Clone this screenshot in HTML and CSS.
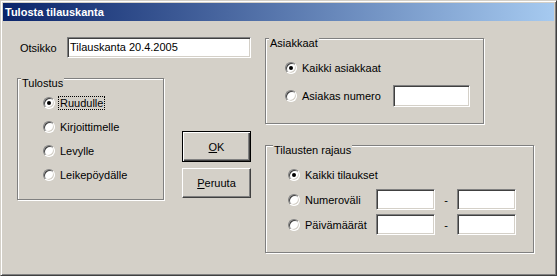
FILE: index.html
```html
<!DOCTYPE html>
<html>
<head>
    <title>Tulosta tilauskanta</title>
    <link rel="stylesheet" href="styles.css">
</head>
<body>
    <div class="window">
        <div class="titlebar">Tulosta tilauskanta</div>

        <div class="client">
            <div class="col-left">
                <div class="field-row">
                    <span class="field-label">Otsikko</span>
                    <div class="textbox textbox-title">Tilauskanta 20.4.2005</div>
                </div>

                <div class="left-bottom">
                    <div class="group group-print">
                        <span class="group-title">Tulostus</span>
                        <div class="option"><span class="radio checked"></span><span class="option-text focused">Ruudulle</span></div>
                        <div class="option"><span class="radio"></span><span class="option-text">Kirjoittimelle</span></div>
                        <div class="option"><span class="radio"></span><span class="option-text">Levylle</span></div>
                        <div class="option"><span class="radio"></span><span class="option-text">Leikepöydälle</span></div>
                    </div>

                    <div class="buttons">
                        <button class="btn btn-default"><u>O</u>K</button>
                        <button class="btn"><u>P</u>eruuta</button>
                    </div>
                </div>
            </div>

            <div class="col-right">
                <div class="group group-customers">
                    <span class="group-title">Asiakkaat</span>
                    <div class="option span-all"><span class="radio checked"></span><span class="option-text">Kaikki asiakkaat</span></div>
                    <div class="option"><span class="radio"></span><span class="option-text">Asiakas numero</span></div>
                    <div class="textbox textbox-customer"></div>
                </div>

                <div class="group group-orders">
                    <span class="group-title group-title-wide">Tilausten rajaus</span>
                    <div class="option span-all"><span class="radio checked"></span><span class="option-text">Kaikki tilaukset</span></div>

                    <div class="option"><span class="radio"></span><span class="option-text">Numeroväli</span></div>
                    <div class="textbox textbox-small"></div>
                    <span class="dash">-</span>
                    <div class="textbox textbox-small"></div>

                    <div class="option"><span class="radio"></span><span class="option-text">Päivämäärät</span></div>
                    <div class="textbox textbox-small"></div>
                    <span class="dash">-</span>
                    <div class="textbox textbox-small"></div>
                </div>
            </div>
        </div>
    </div>
</body>
</html>
```

FILE: styles.css
```css
* {
    box-sizing: border-box;
    margin: 0;
    padding: 0;
}

html {
    background-color: #d4d0c8;
}

body {
    margin: 0;
    font-family: "Liberation Sans", Arial, sans-serif;
    font-size: 11px;
    color: #000000;
}

/* window frame */
.window {
    width: 557px;
    height: 276px;
    padding: 2px;
    background-color: #d4d0c8;
    border: 1px solid;
    border-color: #d4d0c8 #404040 #404040 #d4d0c8;
    box-shadow: inset 1px 1px #ffffff, inset -1px -1px #808080;
}

.titlebar {
    height: 18px;
    padding-left: 2px;
    line-height: 18px;
    font-size: 11px;
    font-weight: bold;
    color: #ffffff;
    background: linear-gradient(to right, #0a246a, #a6caf0);
}

.client {
    display: flex;
    padding: 16px 0 0 14px;
}

.col-left {
    width: 234px;
    margin-right: 14px;
}

.col-right {
    display: flex;
    flex-direction: column;
    gap: 21px;
    padding-top: 1px;
}

/* Otsikko row */
.field-row {
    display: flex;
    align-items: center;
    height: 21px;
}

.field-label {
    width: 50px;
    padding-left: 3px;
}

/* sunken text boxes */
.textbox {
    height: 21px;
    padding-left: 2px;
    line-height: 19px;
    background-color: #ffffff;
    border: 1px solid;
    border-color: #808080 #ffffff #ffffff #808080;
    box-shadow: inset 1px 1px #404040, inset -1px -1px #d4d0c8;
}

.textbox-title {
    width: 184px;
}

.textbox-customer {
    width: 77px;
    height: 22px;
}

.textbox-small {
    width: 59px;
}

.left-bottom {
    display: flex;
    gap: 18px;
    margin-top: 20px;
}

/* etched group boxes */
.group {
    position: relative;
    border: 1px solid #808080;
    box-shadow: inset 1px 1px #ffffff, 1px 1px #ffffff;
}

.group-title {
    position: absolute;
    top: -2px;
    left: 3px;
    padding: 0 1px;
    line-height: 13px;
    background-color: #d4d0c8;
}

.group-title-wide {
    left: 7px;
}

.group-print {
    display: flex;
    flex-direction: column;
    width: 147px;
    height: 122px;
    padding: 12px 0 0 25px;
}

.group-print .option {
    height: 24px;
}

.group-customers {
    display: grid;
    grid-template-columns: 108px 77px;
    grid-auto-rows: 22px;
    row-gap: 6px;
    align-content: start;
    align-items: center;
    width: 219px;
    height: 86px;
    padding: 18px 0 0 19px;
}

.group-orders {
    display: grid;
    grid-template-columns: 88px 59px 22px 59px;
    grid-auto-rows: 21px;
    row-gap: 4px;
    align-content: start;
    align-items: center;
    width: 269px;
    height: 108px;
    padding: 18px 0 0 22px;
}

.span-all {
    grid-column: 1 / -1;
}

.dash {
    text-align: center;
}

/* option buttons */
.option {
    display: flex;
    align-items: center;
}

.radio {
    position: relative;
    width: 12px;
    height: 12px;
    margin-right: 3px;
    flex-shrink: 0;
    border-radius: 50%;
    background-color: #ffffff;
    border: 1px solid;
    border-color: #808080 #ffffff #ffffff #808080;
    box-shadow: inset 1px 1px #404040, inset -1px -1px #d4d0c8;
}

.radio.checked::after {
    content: "";
    position: absolute;
    top: 3px;
    left: 3px;
    width: 4px;
    height: 4px;
    border-radius: 50%;
    background-color: #000000;
}

.option-text {
    padding: 0 2px;
    line-height: 14px;
    white-space: nowrap;
}

.option-text.focused {
    outline: 1px dotted #000000;
    outline-offset: -1px;
}

/* command buttons */
.buttons {
    display: flex;
    flex-direction: column;
    gap: 6px;
    margin-top: 53px;
}

.btn {
    width: 69px;
    height: 30px;
    font-family: inherit;
    font-size: 11px;
    color: #000000;
    background-color: #d4d0c8;
    border: 1px solid;
    border-color: #ffffff #404040 #404040 #ffffff;
    box-shadow: inset -1px -1px #808080;
}

.btn-default {
    height: 31px;
    border-color: #000000;
    box-shadow: inset 1px 1px #ffffff, inset -1px -1px #404040, inset -2px -2px #808080;
}
```
